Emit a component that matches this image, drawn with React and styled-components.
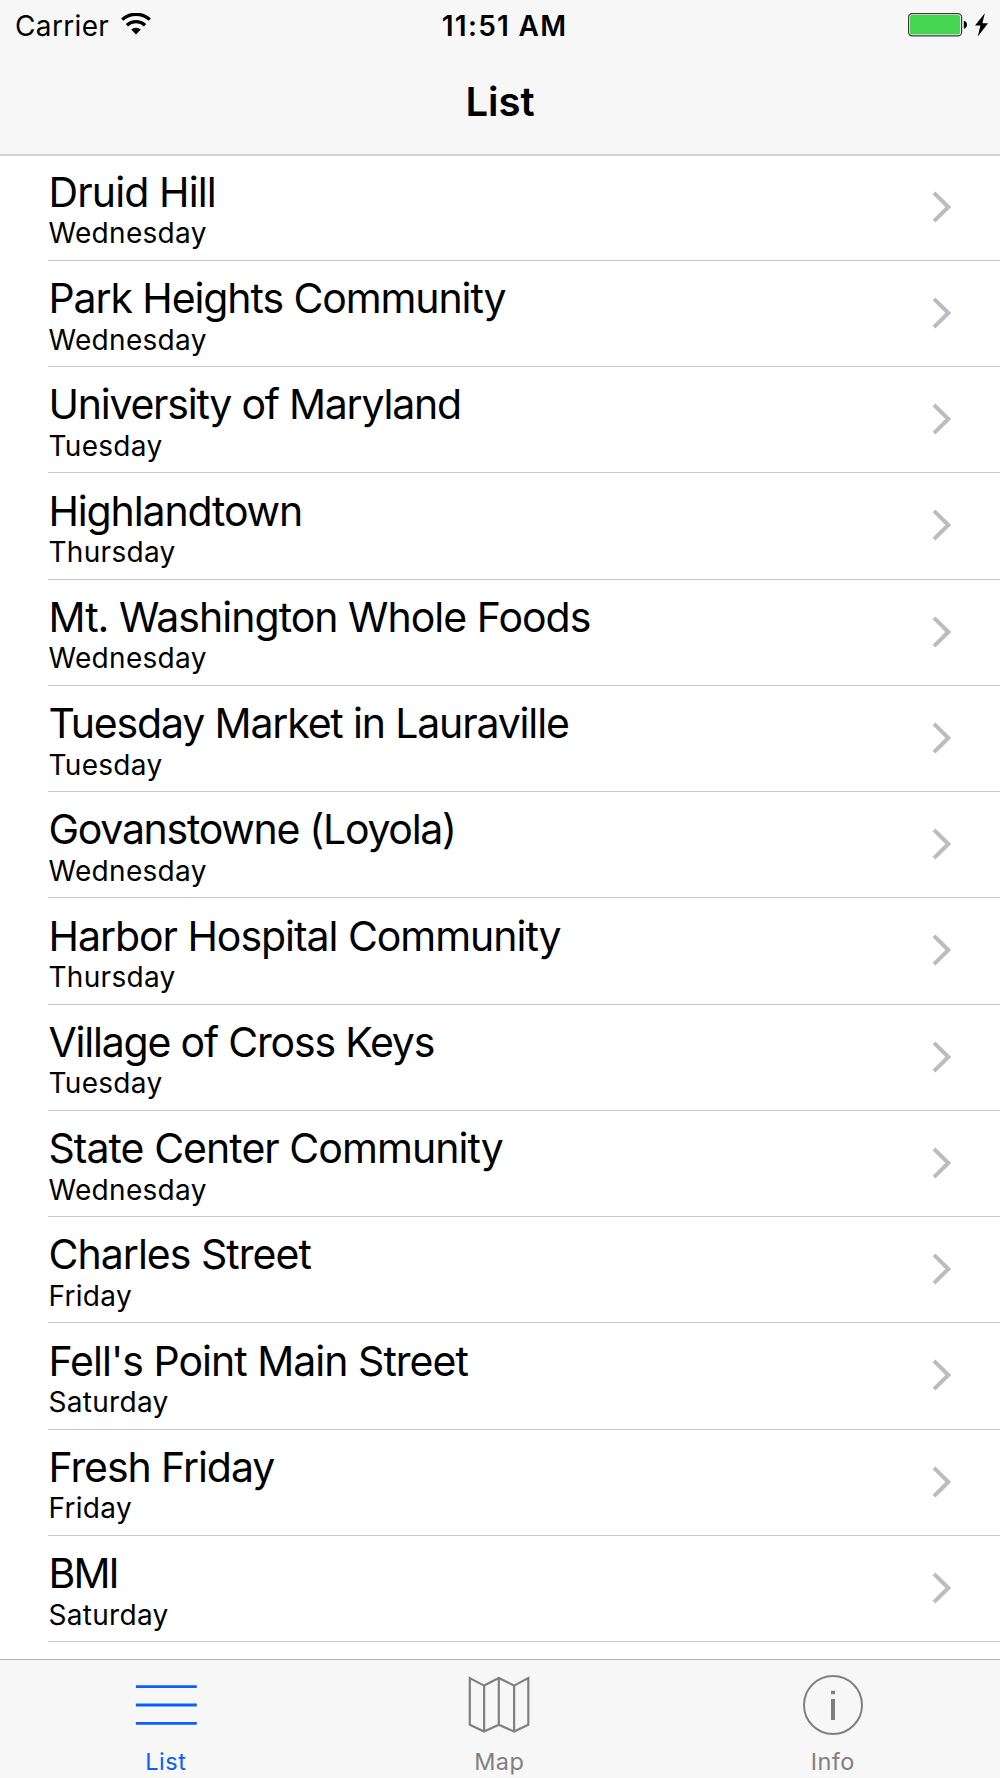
import React from "react";
import styled, { createGlobalStyle } from "styled-components";

const markets = [
  { name: "Druid Hill", day: "Wednesday", tracking: -0.88 },
  { name: "Park Heights Community", day: "Wednesday", tracking: -1.1 },
  { name: "University of Maryland", day: "Tuesday", tracking: -1.24 },
  { name: "Highlandtown", day: "Thursday", tracking: -1.14 },
  { name: "Mt. Washington Whole Foods", day: "Wednesday", tracking: -0.98 },
  { name: "Tuesday Market in Lauraville", day: "Tuesday", tracking: -1.16 },
  { name: "Govanstowne (Loyola)", day: "Wednesday", tracking: -1.28 },
  { name: "Harbor Hospital Community", day: "Thursday", tracking: -1.04 },
  { name: "Village of Cross Keys", day: "Tuesday", tracking: -1.2 },
  { name: "State Center Community", day: "Wednesday", tracking: -0.96 },
  { name: "Charles Street", day: "Friday", tracking: -0.97 },
  { name: "Fell's Point Main Street", day: "Saturday", tracking: -0.98 },
  { name: "Fresh Friday", day: "Friday", tracking: -1.08 },
  { name: "BMI", day: "Saturday", tracking: -1.9 },
];

const WifiIcon = () => (
  <svg width="30" height="22" viewBox="0 0 30 22">
    <path d="M1.2 6.6A20.5 20.5 0 0 1 28.8 6.6" fill="none" stroke="#000" strokeWidth="3.3" />
    <path d="M5.9 12.2A13.5 13.5 0 0 1 24.1 12.2" fill="none" stroke="#000" strokeWidth="3.3" />
    <path d="M10.2 16.6A7.4 7.4 0 0 1 19.8 16.6L15 21.6Z" />
  </svg>
);

const BatteryIcon = () => (
  <svg width="60" height="24" viewBox="0 0 60 24">
    <rect x="0.6" y="0.6" width="53" height="22.2" rx="3.6" fill="#fff" stroke="#3a343c" strokeWidth="1.2" />
    <rect x="2" y="2" width="50.2" height="19.4" rx="2" fill="#44d551" />
    <path d="M55.8 7.7C60 8.2 60 15.2 55.8 15.7Z" />
  </svg>
);

const BoltIcon = () => (
  <svg width="13" height="24" viewBox="0 0 13 24">
    <path d="M9.8 0.3L0 12.6H5.4L2.8 23.4L13 10.2H7.4Z" />
  </svg>
);

const Chevron = () => (
  <svg width="20" height="32" viewBox="0 0 20 32">
    <path d="M2 1.9L16.3 16L2 30.1" fill="none" stroke="#bcbbc1" strokeWidth="4.1" />
  </svg>
);

const ListIcon = () => (
  <svg width="62" height="60" viewBox="0 0 62 60">
    <path d="M0.9 11.7H61.8M0.9 30H61.8M0.9 48.3H61.8" stroke="#0a60ff" strokeWidth="2.8" />
  </svg>
);

const MapIcon = () => (
  <svg width="62" height="60" viewBox="0 0 62 60">
    <path
      d="M1.8 3.1L16.1 10.6L30.8 3.1L46.1 10.6L60.3 3.1V49.7L46.1 56.6L30.8 49.7L16.1 56.6L1.8 49.7ZM16.1 10.6V56.4M30.8 3.5V49.7M46.1 10.6V56.4"
      fill="none"
      stroke="#808080"
      strokeWidth="2.2"
    />
  </svg>
);

const InfoIcon = () => (
  <svg width="62" height="60" viewBox="0 0 62 60">
    <circle cx="31" cy="30" r="29" fill="none" stroke="#808080" strokeWidth="2" />
    <path d="M31 15.7V19.3M31 24V45" stroke="#808080" strokeWidth="4" />
  </svg>
);

const tabs = [
  { label: "List", icon: <ListIcon />, active: true },
  { label: "Map", icon: <MapIcon /> },
  { label: "Info", icon: <InfoIcon /> },
];

export default function App() {
  return (
    <Screen>
      <GlobalStyle />
      <Header>
        <StatusBar>
          <Carrier>
            Carrier
            <WifiIcon />
          </Carrier>
          <Clock>11:51 AM</Clock>
          <Power>
            <BatteryIcon />
            <BoltIcon />
          </Power>
        </StatusBar>
        <Title>List</Title>
      </Header>
      <MarketList>
        {markets.map((market) => (
          <Row key={market.name}>
            <div>
              <Name $tracking={market.tracking}>{market.name}</Name>
              <Day>{market.day}</Day>
            </div>
            <Chevron />
          </Row>
        ))}
      </MarketList>
      <TabBar>
        {tabs.map((tab) => (
          <Tab key={tab.label} $active={tab.active}>
            {tab.icon}
            <span>{tab.label}</span>
          </Tab>
        ))}
      </TabBar>
    </Screen>
  );
}

const GlobalStyle = createGlobalStyle`
  * {
    box-sizing: border-box;
  }
  body {
    margin: 0;
    background: #fff;
    color: #000;
    font-family: Inter, "Liberation Sans", sans-serif;
  }
`;

const Screen = styled.div`
  display: flex;
  flex-direction: column;
  width: 1000px;
  height: 1778px;
  overflow: hidden;
  svg {
    display: block;
    flex-shrink: 0;
  }
`;

const Header = styled.header`
  flex-shrink: 0;
  height: 156px;
  background: #f7f7f7;
  border-bottom: 2px solid #d2d2d2;
`;

const StatusBar = styled.div`
  display: grid;
  grid-template-columns: 1fr auto 1fr;
  align-items: center;
  height: 50px;
  padding: 0 12px 0 15px;
  font-size: 28px;
  line-height: 50px;
`;

const Carrier = styled.div`
  display: flex;
  align-items: center;
  gap: 12px;
  padding-top: 1px;
  letter-spacing: 0.35px;
  svg {
    margin-top: -4px;
  }
`;

const Clock = styled.div`
  padding: 1px 0 0 6px;
  font-weight: 600;
  letter-spacing: 1.3px;
`;

const Power = styled.div`
  display: flex;
  justify-content: flex-end;
  align-items: center;
  gap: 7px;
  margin-top: -2px;
`;

const Title = styled.h1`
  margin: 0;
  font-size: 40px;
  font-weight: 600;
  line-height: 104px;
  text-align: center;
`;

const MarketList = styled.ul`
  flex: 1;
  min-height: 0;
  margin: -1.3px 0 0;
  padding: 0;
  list-style: none;
`;

const Row = styled.li`
  display: flex;
  justify-content: space-between;
  align-items: flex-start;
  height: 106.26px;
  margin-left: 48px;
  padding: 13.1px 48px 0 0.5px;
  border-bottom: 1px solid #c8c7cc;
  & > svg {
    margin-top: 22.8px;
  }
`;

const Name = styled.div`
  font-size: 41px;
  line-height: 48px;
  letter-spacing: ${({ $tracking }) => $tracking}px;
  white-space: nowrap;
`;

const Day = styled.div`
  padding-top: 0.6px;
  font-size: 28px;
  line-height: 34px;
  letter-spacing: 0.3px;
`;

const TabBar = styled.nav`
  display: grid;
  grid-template-columns: repeat(3, 333.5px);
  justify-content: center;
  flex-shrink: 0;
  height: 119px;
  padding-right: 1.4px;
  background: #f7f7f7;
  border-top: 1px solid #b2b2b2;
`;

const Tab = styled.div`
  display: flex;
  flex-direction: column;
  align-items: center;
  padding-top: 15px;
  color: ${({ $active }) => ($active ? "#0a60ff" : "#808080")};
  font-size: 23.5px;
  line-height: 28px;
  letter-spacing: 0.5px;
  span {
    margin-top: 13px;
  }
`;
